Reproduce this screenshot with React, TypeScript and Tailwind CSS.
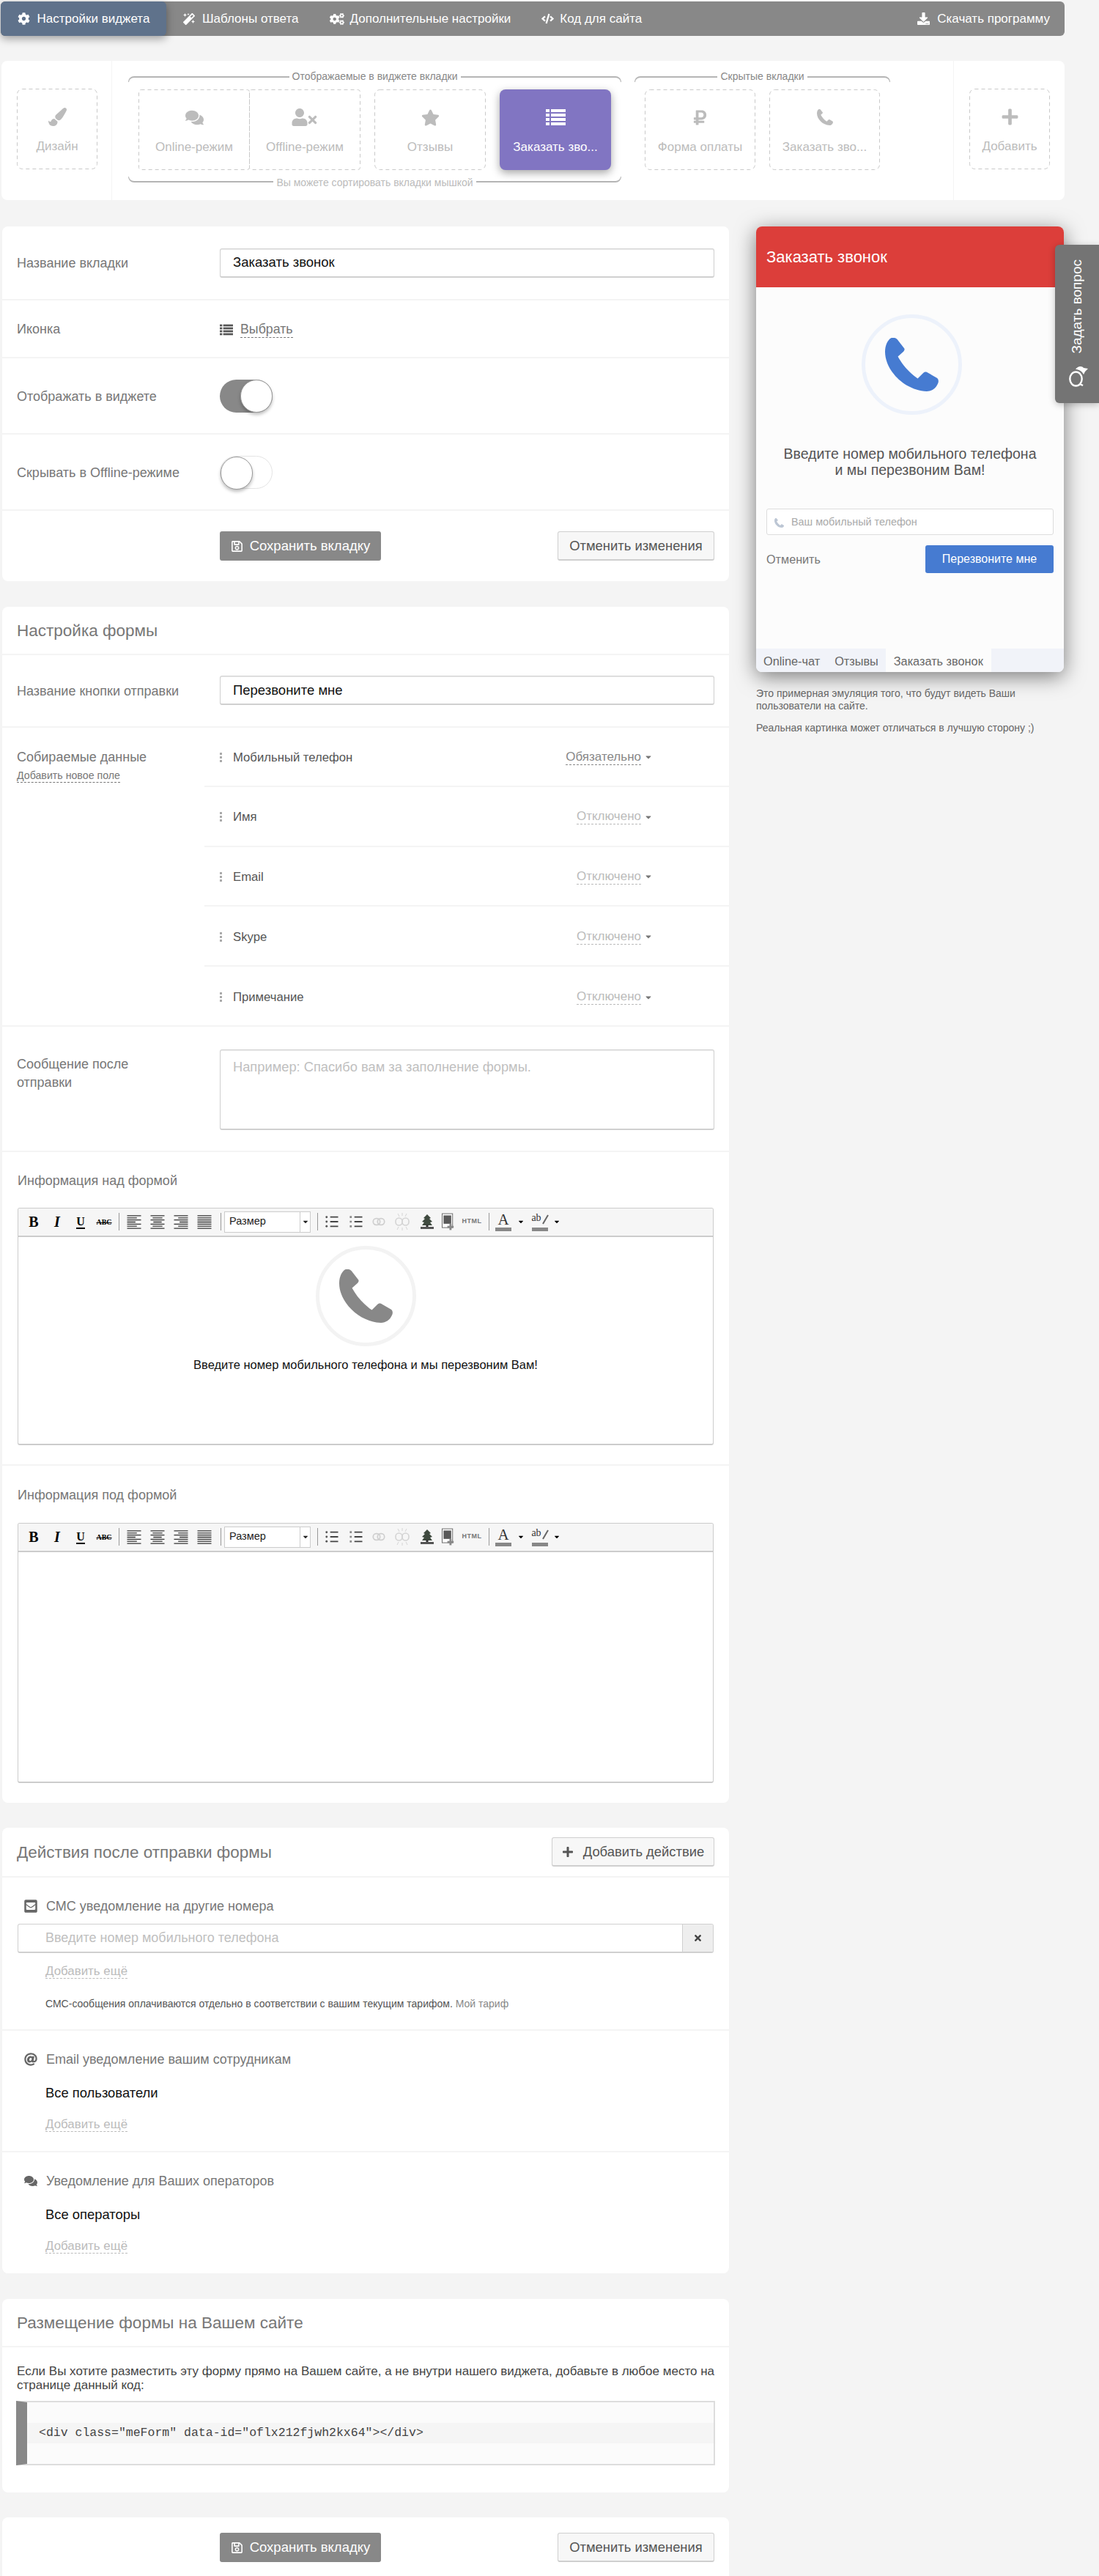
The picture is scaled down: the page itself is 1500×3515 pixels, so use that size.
import type { ReactNode } from "react";
import {
  FaAt,
  FaCaretDown,
  FaCode,
  FaCog,
  FaCogs,
  FaComments,
  FaDownload,
  FaEnvelopeSquare,
  FaMagic,
  FaPaintBrush,
  FaPlus,
  FaRegSave,
  FaRubleSign,
  FaStar,
  FaTimes,
  FaUser,
} from "react-icons/fa";

function Phone({ className }: { className?: string }) {
  return (
    <svg viewBox="0 0 100 100" className={className} fill="currentColor">
      <path d="M12 0C16-1 20 0 23 3L36 20C37 22 36 24 34 26L24 35C32 50 46 66 61 76L71 66C73 64 75 63 78 64L97 75C100 77 101 82 98 87C95 94 87 100 78 100C35 98 0 60 0 26C0 14 5 3 12 0Z" />
    </svg>
  );
}

// four rows of square + bar, the tab's list icon
function ListGlyph({ className }: { className?: string }) {
  return (
    <svg viewBox="0 0 27 22" className={className} fill="currentColor">
      {[0, 6, 12, 18].map((y) => (
        <g key={y}>
          <rect x="0" y={y} width="5" height="4" />
          <rect x="7" y={y} width="20" height="4" />
        </g>
      ))}
    </svg>
  );
}

function TabBox({
  icon,
  label,
  width,
  radius = 7,
  className = "",
}: {
  icon: ReactNode;
  label: string;
  width: number;
  radius?: number;
  className?: string;
}) {
  const box = width === 110 ? "w-[110px]" : width === 151 ? "w-[151px]" : "w-[152px]";
  return (
    <div className={`relative flex h-[110px] shrink-0 flex-col items-center pt-[24px] text-[#bcbcbc] ${box} ${className}`}>
      <svg className="absolute inset-0 h-[110px] w-full" fill="none" stroke="#c9c9c9" strokeDasharray="5 4">
        <rect x="0.5" y="0.5" width={width - 1} height="109" rx={radius} />
      </svg>
      <div className="flex h-[28px] items-center text-[25px]">{icon}</div>
      <div className="mt-[17px] whitespace-nowrap text-[17px] leading-[20px]">{label}</div>
    </div>
  );
}

function Bracket({ text, tone, flip }: { text: string; tone: string; flip?: boolean }) {
  const left = flip
    ? "mb-[8px] rounded-bl-lg border-b-2 border-l"
    : "mt-[8px] rounded-tl-lg border-t-2 border-l";
  const right = flip
    ? "mb-[8px] rounded-br-lg border-b-2 border-r"
    : "mt-[8px] rounded-tr-lg border-t-2 border-r";
  return (
    <div className={`flex h-[16px] items-center gap-[4px] text-[14px] leading-[16px] ${tone}`}>
      <div className={`h-[8px] flex-1 border-[#b5b5b5] ${left}`} />
      <span>{text}</span>
      <div className={`h-[8px] flex-1 border-[#b5b5b5] ${right}`} />
    </div>
  );
}

function Toggle({ on }: { on: boolean }) {
  return (
    <div
      className={`flex h-[45px] w-[72px] rounded-full ${
        on ? "justify-end bg-[#888888]" : "justify-start border border-[#e4e4e4] bg-white"
      }`}
    >
      <div className="h-[45px] w-[44px] rounded-full border border-[#999999] bg-white shadow-[0_3px_4px_rgba(0,0,0,0.25)]" />
    </div>
  );
}

function Row({
  label,
  height,
  children,
}: {
  label: ReactNode;
  height: string;
  children: ReactNode;
}) {
  return (
    <div className={`flex items-center border-b-2 border-[#f4f4f4] pl-[20px] pr-[20px] ${height}`}>
      <div className="w-[277px] shrink-0 pt-[2px] text-[18px] text-[#777777]">{label}</div>
      <div className="flex-1">{children}</div>
    </div>
  );
}

function TextInput({ value }: { value: string }) {
  return (
    <input
      readOnly
      value={value}
      className="block h-[40px] w-full rounded-[3px] border border-[#d0d0d0] border-b-2 bg-white px-[17px] text-[18.5px] text-[#111111] shadow-[inset_0_1px_1px_rgba(0,0,0,0.08)] outline-none"
    />
  );
}

function Buttons() {
  return (
    <div className="flex items-center justify-between">
      <button className="flex h-[40px] w-[220px] items-center justify-center gap-[9px] rounded-[3px] bg-[#888888] text-[18.5px] text-white">
        <FaRegSave className="text-[17px]" />
        Сохранить вкладку
      </button>
      <button className="h-[40px] w-[214px] rounded-[3px] border border-[#cfcfcf] border-b-2 bg-[#f7f7f7] text-[18.4px] text-[#555555]">
        Отменить изменения
      </button>
    </div>
  );
}

function FieldRow({ name, status, on, last }: { name: string; status: string; on?: boolean; last?: boolean }) {
  return (
    <div
      className={`flex h-[81.6px] items-center pl-[21px] pr-[104px] pt-[2px] ${last ? "" : "border-b-2 border-[#f4f4f4]"}`}
    >
      <div className="flex w-[18px] flex-col gap-[2px]">
        <span className="h-[3px] w-[3px] bg-[#aaaaaa]" />
        <span className="h-[3px] w-[3px] bg-[#aaaaaa]" />
        <span className="h-[3px] w-[3px] bg-[#aaaaaa]" />
      </div>
      <div className="flex-1 text-[16.7px] text-[#555555]">{name}</div>
      <span
        className={`border-b border-dashed text-[17px] leading-[20px] ${
          on ? "border-[#888888] text-[#888888]" : "border-[#bbbbbb] text-[#bbbbbb]"
        }`}
      >
        {status}
      </span>
      <FaCaretDown className="ml-[4px] text-[12px] text-[#777777]" />
    </div>
  );
}

function AlignIcon({ kind }: { kind: "left" | "center" | "right" | "full" }) {
  const rows = [20, 14, 20, 12, 20, 14, 20];
  return (
    <svg viewBox="0 0 20 20" className="h-[19px] w-[20px]" stroke="#333333" strokeWidth="1.4">
      {rows.map((w, i) => {
        const len = kind === "full" ? 20 : w;
        const x = kind === "left" || kind === "full" ? 0 : kind === "center" ? (20 - len) / 2 : 20 - len;
        return <line key={i} x1={x} x2={x + len} y1={1 + i * 3} y2={1 + i * 3} />;
      })}
    </svg>
  );
}

function Tool({ width, children }: { width: string; children: ReactNode }) {
  return <div className={`flex h-[30px] shrink-0 items-center justify-center ${width}`}>{children}</div>;
}

function ListIcon({ numbered }: { numbered?: boolean }) {
  return (
    <svg viewBox="0 0 20 20" className="h-[18px] w-[19px]" stroke="#444444" strokeWidth="2">
      {[3, 10, 17].map((y) => (
        <g key={y}>
          <line x1="8" x2="20" y1={y} y2={y} />
          {numbered ? (
            <line x1="1" x2="4" y1={y} y2={y} strokeWidth="3" stroke="#888888" />
          ) : (
            <circle cx="2.5" cy={y} r="1.6" fill="#555555" stroke="none" />
          )}
        </g>
      ))}
    </svg>
  );
}

function Toolbar() {
  return (
    <div className="flex h-[39px] items-center border-b-2 border-[#cccccc] bg-[#f6f6f6] pl-[5px] font-['Liberation_Serif','Times_New_Roman',serif] text-black">
      <Tool width="w-[32px]">
        <b className="text-[20px]">B</b>
      </Tool>
      <Tool width="w-[32px]">
        <b className="text-[20px] italic">I</b>
      </Tool>
      <Tool width="w-[32px]">
        <b className="border-b-2 border-black text-[16px] leading-[17px]">U</b>
      </Tool>
      <Tool width="w-[32px]">
        <span className="text-[10px] font-bold line-through">ABC</span>
      </Tool>
      <div className="mx-[4px] h-[24px] w-px bg-[#999999]" />
      <Tool width="w-[32px]">
        <AlignIcon kind="left" />
      </Tool>
      <Tool width="w-[32px]">
        <AlignIcon kind="center" />
      </Tool>
      <Tool width="w-[32px]">
        <AlignIcon kind="right" />
      </Tool>
      <Tool width="w-[32px]">
        <AlignIcon kind="full" />
      </Tool>
      <div className="ml-[6px] h-[24px] w-px bg-[#999999]" />
      <div className="ml-[4px] flex h-[29px] w-[118px] items-center border border-[#cccccc] bg-white font-['Liberation_Sans',Arial,sans-serif] text-[14.5px] text-[#222222]">
        <span className="flex-1 pl-[6px]">Размер</span>
        <span className="flex h-full w-[14px] items-center justify-center border-l border-[#cccccc]">
          <FaCaretDown className="text-[10px]" />
        </span>
      </div>
      <div className="ml-[9px] mr-[2px] h-[24px] w-px bg-[#999999]" />
      <Tool width="w-[32px]">
        <ListIcon />
      </Tool>
      <Tool width="w-[34px]">
        <ListIcon numbered />
      </Tool>
      <Tool width="w-[30px]">
        <svg viewBox="0 0 20 14" className="h-[12px] w-[20px]" fill="none" stroke="#cfcfcf" strokeWidth="2">
          <rect x="1" y="2" width="11" height="10" rx="5" />
          <rect x="8" y="2" width="11" height="10" rx="5" />
        </svg>
      </Tool>
      <Tool width="w-[34px]">
        <svg viewBox="0 0 22 24" className="h-[24px] w-[22px]" fill="none" stroke="#d4d4d4" strokeWidth="1.6">
          <rect x="2" y="7" width="9" height="10" rx="4.5" />
          <rect x="11" y="7" width="9" height="10" rx="4.5" />
          <path d="M11 0v4M5 1l2 4M17 1l-2 4M11 20v4M6 19l-2 4M16 19l2 4" strokeWidth="1" />
        </svg>
      </Tool>
      <Tool width="w-[34px]">
        <svg viewBox="0 0 18 22" className="h-[22px] w-[18px]">
          <path d="M9 1l5 5-2 1 4 4-3 1 3 4H2l3-4-3-1 4-4-2-1z" fill="#3f4a3f" />
          <rect x="7.5" y="15" width="3" height="3" fill="#333333" />
          <rect x="0" y="18" width="18" height="3" fill="#555555" />
        </svg>
      </Tool>
      <Tool width="w-[24px]">
        <svg viewBox="0 0 20 24" className="h-[24px] w-[19px]">
          <rect x="0.5" y="0.5" width="15" height="20" fill="#ffffff" stroke="#666666" />
          <rect x="2.5" y="3" width="11" height="12" fill="#5a5a5a" />
          <rect x="11" y="15" width="3" height="9" fill="#888888" />
          <rect x="8" y="18" width="9" height="3" fill="#888888" />
        </svg>
      </Tool>
      <Tool width="w-[40px]">
        <span className="font-['Liberation_Sans',Arial,sans-serif] text-[9px] font-bold tracking-[0.5px] text-[#777777]">
          HTML
        </span>
      </Tool>
      <div className="ml-[3px] h-[24px] w-px bg-[#999999]" />
      <Tool width="w-[38px]">
        <div className="flex flex-col items-center">
          <span className="text-[21px] leading-[21px] text-[#333333]">A</span>
          <span className="h-[5px] w-[22px] bg-[#888888]" />
        </div>
      </Tool>
      <FaCaretDown className="text-[10px]" />
      <Tool width="ml-[3px] w-[36px]">
        <div className="flex flex-col items-center">
          <span className="flex h-[21px] items-start text-[14px] leading-[16px] text-[#333333]">
            ab
            <svg viewBox="0 0 10 16" className="mt-[3px] h-[16px] w-[10px]" fill="none" stroke="#666666" strokeWidth="2">
              <path d="M9 1L2 13" />
            </svg>
          </span>
          <span className="h-[5px] w-[22px] bg-[#888888]" />
        </div>
      </Tool>
      <FaCaretDown className="text-[10px]" />
    </div>
  );
}

function AddMore() {
  return (
    <span className="border-b border-dashed border-[#bbbbbb] text-[16.9px] leading-[20px] text-[#bbbbbb]">
      Добавить ещё
    </span>
  );
}

function ActionHead({ icon, text }: { icon: ReactNode; text: string }) {
  return (
    <div className="flex h-[24px] items-center text-[18px] text-[#777777]">
      <div className="flex w-[39px] justify-center pr-[3px] text-[18px] text-[#666666]">{icon}</div>
      {text}
    </div>
  );
}

export default function App() {
  return (
    <div className="relative h-[3515px] w-[1500px] overflow-hidden bg-[#f4f4f4] font-['Liberation_Sans',Arial,sans-serif]">
      {/* top nav */}
      <div className="ml-[1px] mt-[2px] flex h-[47px] w-[1452px] items-center rounded-md bg-[#888888] text-[17px] text-white">
        <div className="flex h-full w-[226px] shrink-0 items-center justify-center gap-[10px] rounded-md bg-[#5f728b] shadow-[0_4px_12px_rgba(0,0,0,0.35)]">
          <FaCog className="text-[17px]" />
          Настройки виджета
        </div>
        <div className="ml-[23px] flex items-center gap-[10px]">
          <FaMagic className="text-[16px]" />
          Шаблоны ответа
        </div>
        <div className="ml-[42px] flex items-center gap-[8px]">
          <FaCogs className="text-[20px]" />
          Дополнительные настройки
        </div>
        <div className="ml-[42px] flex items-center gap-[8px]">
          <FaCode className="text-[17px]" />
          Код для сайта
        </div>
        <div className="ml-auto mr-[20px] flex items-center gap-[10px]">
          <FaDownload className="text-[17px]" />
          Скачать программу
        </div>
      </div>

      {/* tab editor */}
      <div className="ml-[2px] mt-[34px] flex h-[190px] w-[1451px] rounded-lg bg-white">
        <div className="flex w-[151px] shrink-0 items-center border-r border-[#f4f4f4] pl-[21px]">
          <TabBox width={110} className="mb-[4px]" icon={<FaPaintBrush />} label="Дизайн" />
        </div>
        <div className="flex flex-1 gap-[18px] pl-[22px] pt-[13px]">
          <div className="w-[673px]">
            <Bracket text="Отображаемые в виджете вкладки" tone="text-[#888888]" />
            <div className="mt-[10px] flex px-[14px]">
              <TabBox width={152} radius={3} icon={<FaComments />} label="Online-режим" />
              <TabBox
                width={152}
                radius={3}
                className="ml-[-1px]"
                icon={
                  <span className="flex items-end">
                    <FaUser className="text-[24px]" />
                    <FaTimes className="ml-[-3px] text-[17px]" />
                  </span>
                }
                label="Offline-режим"
              />
              <TabBox width={152} className="ml-[19px]" icon={<FaStar />} label="Отзывы" />
              <div className="ml-[19px] flex h-[110px] w-[152px] flex-col items-center rounded-lg bg-[#8175c2] pt-[24px] text-white shadow-[0_4px_12px_rgba(0,0,0,0.35)]">
                <div className="flex h-[28px] items-center">
                  <ListGlyph className="h-[22px] w-[27px]" />
                </div>
                <div className="mt-[17px] text-[17px] leading-[20px]">Заказать зво...</div>
              </div>
            </div>
            <div className="mt-[9px]">
              <Bracket text="Вы можете сортировать вкладки мышкой" tone="text-[#bbbbbb]" flip />
            </div>
          </div>
          <div className="w-[349px]">
            <Bracket text="Скрытые вкладки" tone="text-[#888888]" />
            <div className="mt-[10px] flex gap-[19px] px-[14px]">
              <TabBox width={151} icon={<FaRubleSign className="text-[23px]" />} label="Форма оплаты" />
              <TabBox width={151} icon={<Phone className="h-[22px] w-[22px]" />} label="Заказать зво..." />
            </div>
          </div>
        </div>
        <div className="flex w-[152px] shrink-0 items-center border-l border-[#f4f4f4] pl-[21px]">
          <TabBox width={110} className="mb-[4px]" icon={<FaPlus />} label="Добавить" />
        </div>
      </div>

      {/* main columns */}
      <div className="ml-[3px] mt-[36px] flex gap-[37px]">
        <div className="flex w-[992px] flex-col gap-[34.5px]">
          <div className="h-[484px] rounded-lg bg-white">
            <Row label="Название вкладки" height="h-[101px]">
              <TextInput value="Заказать звонок" />
            </Row>
            <Row label="Иконка" height="h-[79px]">
              <div className="flex items-center gap-[10px] pt-[3px]">
                <ListGlyph className="h-[16px] w-[18px] text-[#555555]" />
                <span className="border-b border-dashed border-[#777777] text-[17.8px] leading-[21px] text-[#777777]">
                  Выбрать
                </span>
              </div>
            </Row>
            <Row label="Отображать в виджете" height="h-[104px]">
              <Toggle on />
            </Row>
            <Row label="Скрывать в Offline-режиме" height="h-[104px]">
              <Toggle on={false} />
            </Row>
            <div className="flex h-[96px] items-center pl-[297px] pr-[20px]">
              <div className="flex-1">
                <Buttons />
              </div>
            </div>
          </div>

          <div className="h-[1632px] rounded-lg bg-white">
            <div className="flex h-[66px] items-center border-b-2 border-[#f4f4f4] pl-[20px] pt-[2px] text-[22.5px] text-[#777777]">
              Настройка формы
            </div>
            <Row label="Название кнопки отправки" height="h-[99px]">
              <TextInput value="Перезвоните мне" />
            </Row>
            <div className="flex h-[408px] border-b-2 border-[#f4f4f4]">
              <div className="w-[276px] shrink-0 pl-[20px] pt-[28px]">
                <div className="text-[18px] leading-[24px] text-[#777777]">Собираемые данные</div>
                <span className="mt-[5px] inline-block border-b border-dashed border-[#777777] text-[14.2px] leading-[17px] text-[#777777]">
                  Добавить новое поле
                </span>
              </div>
              <div className="flex-1">
                <FieldRow name="Мобильный телефон" status="Обязательно" on />
                <FieldRow name="Имя" status="Отключено" />
                <FieldRow name="Email" status="Отключено" />
                <FieldRow name="Skype" status="Отключено" />
                <FieldRow name="Примечание" status="Отключено" last />
              </div>
            </div>
            <div className="flex h-[171px] border-b-2 border-[#f4f4f4] pl-[20px] pr-[20px] pt-[31px]">
              <div className="w-[277px] shrink-0 pt-[8px] text-[18px] leading-[25px] text-[#777777]">
                Сообщение после
                <br />
                отправки
              </div>
              <textarea
                readOnly
                placeholder="Например: Спасибо вам за заполнение формы."
                className="h-[110px] flex-1 resize-none rounded-[3px] border border-[#d0d0d0] border-b-2 px-[17px] py-[9px] text-[18.3px] shadow-[inset_0_1px_1px_rgba(0,0,0,0.08)] outline-none placeholder:text-[#c0c0c0]"
              />
            </div>
            <div className="h-[428px] border-b-2 border-[#f4f4f4] px-[21px] pt-[27px]">
              <div className="h-[49px] text-[18px] leading-[24px] text-[#777777]">Информация над формой</div>
              <div className="h-[324px] overflow-hidden rounded-[3px] border border-[#cccccc] border-b-2">
                <Toolbar />
                <div className="flex flex-col items-center pt-[12px]">
                  <div className="flex h-[137px] w-[137px] items-center justify-center rounded-full border-[5px] border-[#f3f3f3] text-[#888888]">
                    <Phone className="h-[73px] w-[73px]" />
                  </div>
                  <div className="mt-[13px] text-[16.5px] text-[#111111]">Введите номер мобильного телефона и мы перезвоним Вам!</div>
                </div>
              </div>
            </div>
            <div className="px-[21px] pt-[28px]">
              <div className="h-[50px] text-[18px] leading-[24px] text-[#777777]">Информация под формой</div>
              <div className="h-[355px] overflow-hidden rounded-[3px] border border-[#cccccc] border-b-2">
                <Toolbar />
              </div>
            </div>
          </div>

          <div className="h-[608px] rounded-lg bg-white">
            <div className="flex h-[68px] items-center justify-between border-b-2 border-[#f4f4f4] pl-[20px] pr-[20px] text-[22.5px] text-[#777777]">
              <span className="pt-[2px]">Действия после отправки формы</span>
              <button className="flex h-[40px] w-[222px] items-center justify-center gap-[13px] rounded-[3px] border border-[#cfcfcf] border-b-2 bg-[#f7f7f7] text-[18.4px] text-[#555555]">
                <FaPlus className="text-[16px]" />
                Добавить действие
              </button>
            </div>
            <div className="h-[209px] border-b-2 border-[#f4f4f4] px-[21px] pt-[27px]">
              <ActionHead icon={<FaEnvelopeSquare className="text-[20px]" />} text="СМС уведомление на другие номера" />
              <div className="mt-[12px] flex h-[40px] overflow-hidden rounded-[3px] border border-[#d0d0d0] border-b-2">
                <input
                  readOnly
                  placeholder="Введите номер мобильного телефона"
                  className="min-w-0 flex-1 pl-[37px] text-[18px] outline-none placeholder:text-[#c0c0c0]"
                />
                <div className="flex w-[42px] items-center justify-center border-l border-[#d0d0d0] bg-[#eeeeee] text-[13px] text-[#444444]">
                  <FaTimes />
                </div>
              </div>
              <div className="mt-[13px] pl-[38px]">
                <AddMore />
              </div>
              <div className="mt-[22px] pl-[38px] text-[14px] leading-[20px] text-[#555555]">
                СМС-сообщения оплачиваются отдельно в соответствии с вашим текущим тарифом.{" "}
                <span className="text-[#888888]">Мой тариф</span>
              </div>
            </div>
            <div className="h-[166px] border-b-2 border-[#f4f4f4] px-[21px] pt-[27px]">
              <ActionHead icon={<FaAt />} text="Email уведомление вашим сотрудникам" />
              <div className="mt-[22px] pl-[38px] text-[18.4px] leading-[24px] text-[#111111]">Все пользователи</div>
              <div className="mt-[19px] pl-[38px]">
                <AddMore />
              </div>
            </div>
            <div className="px-[21px] pt-[27px]">
              <ActionHead icon={<FaComments />} text="Уведомление для Ваших операторов" />
              <div className="mt-[22px] pl-[38px] text-[18.4px] leading-[24px] text-[#111111]">Все операторы</div>
              <div className="mt-[19px] pl-[38px]">
                <AddMore />
              </div>
            </div>
          </div>

          <div className="h-[264px] rounded-lg bg-white">
            <div className="flex h-[66px] items-center border-b-2 border-[#f4f4f4] pl-[20px] pt-[2px] text-[22.5px] text-[#777777]">
              Размещение формы на Вашем сайте
            </div>
            <div className="pl-[19px] pr-[19px] pt-[23px]">
              <p className="pl-[1px] text-[17px] leading-[19px] text-[#444444]">
                Если Вы хотите разместить эту форму прямо на Вашем сайте, а не внутри нашего виджета, добавьте в любое место на странице данный код:
              </p>
              <div className="mt-[12px] h-[88px] border-2 border-l-[15px] border-[#dddddd] border-l-[#888888] bg-[#fbfbfb] pt-[28px]">
                <pre className="h-[28px] bg-[#f5f5f5] pl-[16px] font-['Liberation_Mono','Courier_New',monospace] text-[16.5px] leading-[28px] text-[#444444]">
                  {'<div class="meForm" data-id="oflx212fjwh2kx64"></div>'}
                </pre>
              </div>
            </div>
          </div>

          <div className="h-[100px] rounded-lg bg-white pl-[297px] pr-[20px] pt-[21px]">
            <Buttons />
          </div>
        </div>

        {/* widget preview */}
        <div className="w-[420px]">
          <div className="flex h-[608px] flex-col overflow-hidden rounded-lg bg-[#fcfcfc] shadow-[0_6px_28px_rgba(0,0,0,0.5)]">
            <div className="flex h-[83px] shrink-0 items-center bg-[#dc3e3a] pl-[14px] text-[22px] text-white">
              Заказать звонок
            </div>
            <div className="flex flex-1 flex-col px-[14px]">
              <div className="ml-[4px] mt-[37px] flex h-[137px] w-[137px] items-center justify-center self-center rounded-full border-[5px] border-[#edf2fb] text-[#467bd1]">
                <Phone className="h-[73px] w-[73px]" />
              </div>
              <div className="mt-[42px] text-center text-[19.5px] leading-[22px] text-[#555555]">
                Введите номер мобильного телефона
                <br />и мы перезвоним Вам!
              </div>
              <div className="mt-[42px] flex h-[36px] items-center rounded-[3px] border border-[#dddddd] bg-white pl-[10px] pt-[2px] text-[14.4px] text-[#aaaaaa]">
                <Phone className="h-[13px] w-[13px] text-[#bcc6d4]" />
                <span className="ml-[10px]">Ваш мобильный телефон</span>
              </div>
              <div className="mt-[14px] flex items-center justify-between">
                <span className="text-[16.2px] text-[#777777]">Отменить</span>
                <button className="h-[38px] w-[175px] rounded-[3px] bg-[#467bd1] text-[16px] text-white">
                  Перезвоните мне
                </button>
              </div>
            </div>
            <div className="flex h-[32px] items-center bg-[#f1f3f9] text-[16.3px] text-[#666666]">
              <div className="pl-[10px] pt-[2px]">Online-чат</div>
              <div className="pl-[20px] pt-[2px]">Отзывы</div>
              <div className="ml-[10px] flex h-full w-[144px] items-center justify-center bg-[#fcfcfc] pt-[2px]">Заказать звонок</div>
            </div>
          </div>
          <p className="mt-[21px] text-[14px] leading-[17px] text-[#666666]">
            Это примерная эмуляция того, что будут видеть Ваши пользователи на сайте.
          </p>
          <p className="mt-[13px] text-[14px] leading-[17px] text-[#666666]">
            Реальная картинка может отличаться в лучшую сторону ;)
          </p>
        </div>
      </div>

      {/* floating ask button */}
      <div className="absolute left-[1440px] top-[334px] flex h-[216px] w-[60px] flex-col items-center rounded-l-md bg-[#747474] pt-[20px] text-white shadow-[0_2px_10px_rgba(0,0,0,0.25)]">
        <span className="rotate-180 text-[19px] leading-[22px] [writing-mode:vertical-rl]">Задать вопрос</span>
        <svg viewBox="0 0 26 29" className="ml-[3px] mt-[16px] h-[29px] w-[26px]" fill="none" stroke="currentColor" strokeWidth="2.4">
          <ellipse cx="9.5" cy="18" rx="8.2" ry="9.5" />
          <path d="M15 25l4 2" />
          <path d="M9 5C12 0 18 0 20 3L26 4 22 8 20 12C18 8 14 5 9 5Z" fill="currentColor" stroke="none" />
        </svg>
      </div>
    </div>
  );
}
